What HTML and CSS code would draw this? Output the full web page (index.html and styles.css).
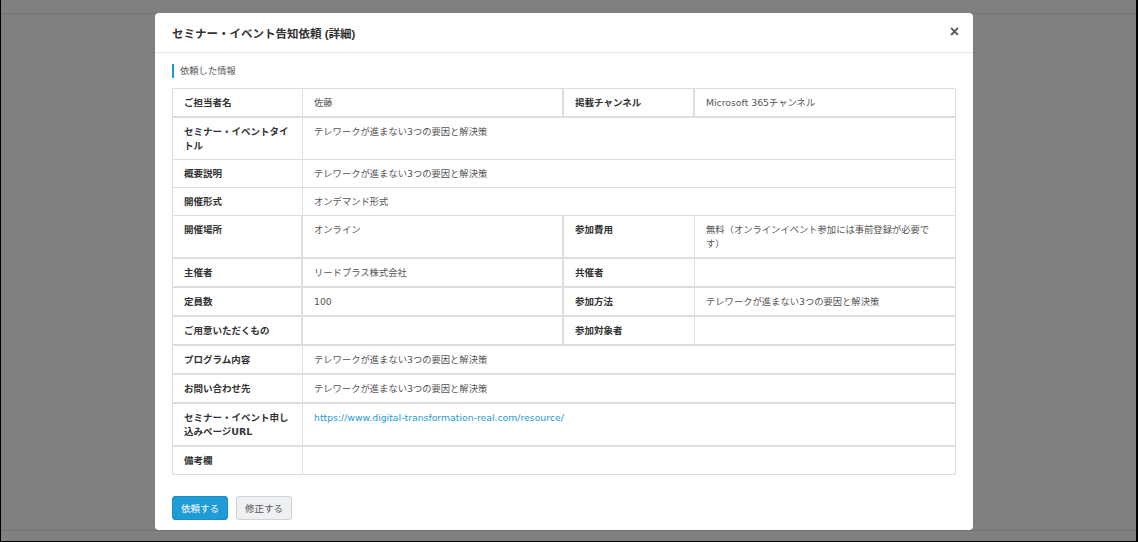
FILE: index.html
```html
<!DOCTYPE html>
<html lang="ja">
<head>
<meta charset="utf-8">
<title>セミナー・イベント告知依頼 (詳細)</title>
<link rel="stylesheet" href="styles.css">
</head>
<body>
<div class="screen">
  <div class="modal">
    <div class="modal-header">
      <h1 class="modal-title">セミナー・イベント告知依頼 (詳細)</h1>
      <span class="close">×</span>
    </div>
    <div class="modal-body">
      <h2 class="section-title">依頼した情報</h2>
      <div class="info">
        <div class="cell label quad">ご担当者名</div>
        <div class="cell value quad">佐藤</div>
        <div class="cell label quad">掲載チャンネル</div>
        <div class="cell value quad last">Microsoft 365チャンネル</div>

        <div class="cell label">セミナー・イベントタイトル</div>
        <div class="cell value span3">テレワークが進まない3つの要因と解決策</div>

        <div class="cell label">概要説明</div>
        <div class="cell value span3">テレワークが進まない3つの要因と解決策</div>

        <div class="cell label">開催形式</div>
        <div class="cell value span3">オンデマンド形式</div>

        <div class="cell label quad">開催場所</div>
        <div class="cell value quad">オンライン</div>
        <div class="cell label quad">参加費用</div>
        <div class="cell value quad last">無料（オンラインイベント参加には事前登録が必要です）</div>

        <div class="cell label quad">主催者</div>
        <div class="cell value quad">リードプラス株式会社</div>
        <div class="cell label quad">共催者</div>
        <div class="cell value quad last"></div>

        <div class="cell label quad">定員数</div>
        <div class="cell value quad">100</div>
        <div class="cell label quad">参加方法</div>
        <div class="cell value quad last">テレワークが進まない3つの要因と解決策</div>

        <div class="cell label quad">ご用意いただくもの</div>
        <div class="cell value quad"></div>
        <div class="cell label quad">参加対象者</div>
        <div class="cell value quad last"></div>

        <div class="cell label thick">プログラム内容</div>
        <div class="cell value span3 thick">テレワークが進まない3つの要因と解決策</div>

        <div class="cell label thick">お問い合わせ先</div>
        <div class="cell value span3 thick">テレワークが進まない3つの要因と解決策</div>

        <div class="cell label thick">セミナー・イベント申し込みページURL</div>
        <div class="cell value span3 thick"><a class="link" href="#">https://www.digital-transformation-real.com/resource/</a></div>

        <div class="cell label">備考欄</div>
        <div class="cell value span3"></div>
      </div>
      <div class="actions">
        <button class="btn btn-primary" type="button">依頼する</button>
        <button class="btn btn-default" type="button">修正する</button>
      </div>
    </div>
  </div>
</div>
</body>
</html>
```

FILE: styles.css
```css
* { box-sizing: border-box; }
html, body { margin: 0; padding: 0; }
body {
  font-family: "DejaVu Sans", "Noto Sans CJK JP", sans-serif;
  color: #333;
}
.screen {
  width: 1138px;
  height: 542px;
  background-color: #808080;
  background-image:
    linear-gradient(#757575, #757575),
    linear-gradient(#757575, #757575);
  background-size: 100% 1px, 100% 1px;
  background-position: 0 13px, 0 530px;
  background-repeat: no-repeat;
  border-left: 1px solid #000;
  border-right: 2px solid #000;
  border-bottom: 1px solid #000;
  padding: 13px 0 0 154px;
  overflow: hidden;
}
.modal {
  width: 818px;
  height: 517px;
  background: #fff;
  border-radius: 4px;
  display: flex;
  flex-direction: column;
}
.modal-header {
  height: 40px;
  flex: 0 0 40px;
  border-bottom: 1px solid #e6e6e6;
  display: flex;
  align-items: center;
  justify-content: space-between;
  padding: 1px 14px 0 17px;
}
.modal-title {
  margin: 0;
  font-family: "Liberation Sans", "Noto Sans CJK JP", sans-serif;
  font-size: 11.5px;
  font-weight: bold;
  color: #333;
}
.close {
  font-family: "Liberation Sans", sans-serif;
  font-size: 16px;
  font-weight: bold;
  color: #555;
  line-height: 1;
  margin-top: -2px;
}
.modal-body {
  padding: 11px 18px 11px 17px;
  display: flex;
  flex-direction: column;
}
.section-title {
  margin: 0 0 10px 0;
  font-size: 9.3px;
  font-weight: normal;
  color: #555;
  border-left: 2px solid #1e9bd7;
  padding-left: 6px;
  line-height: 14px;
  height: 14px;
}
.info {
  display: grid;
  grid-template-columns: 130px 261px 131px 261px;
  border-top: 1px solid #dedede;
  border-left: 1px solid #dedede;
}
.cell {
  border-right: 1px solid #dedede;
  border-bottom: 1px solid #dedede;
  padding: 7px 11px 6px 11px;
  font-size: 9.5px;
  line-height: 14px;
  min-height: 28px;
}
.cell.quad, .cell.thick { border-bottom-width: 2px; }
.cell.quad.value:not(.last) { border-right-width: 2px; }
.cell.label.quad:nth-child(4n+3) { border-right-width: 2px; }
.label {
  font-weight: bold;
  color: #333;
}
.value {
  color: #555;
  font-size: 9.3px;
  padding-right: 22px;
}
.span3 { grid-column: span 3; }
.link {
  color: #1e9bd7;
  text-decoration: none;
}
.actions {
  margin-top: 21px;
  display: flex;
  gap: 8px;
}
.btn {
  height: 24px;
  width: 56px;
  border-radius: 3px;
  font-family: "Noto Sans CJK JP", sans-serif;
  font-size: 9.5px;
  padding: 0;
  cursor: pointer;
}
.btn-primary {
  background: #1f9bd6;
  border: 1px solid #1a8fc6;
  color: #fff;
}
.btn-default {
  background: #eef0f2;
  border: 1px solid #cfd3d6;
  color: #555;
}
```
